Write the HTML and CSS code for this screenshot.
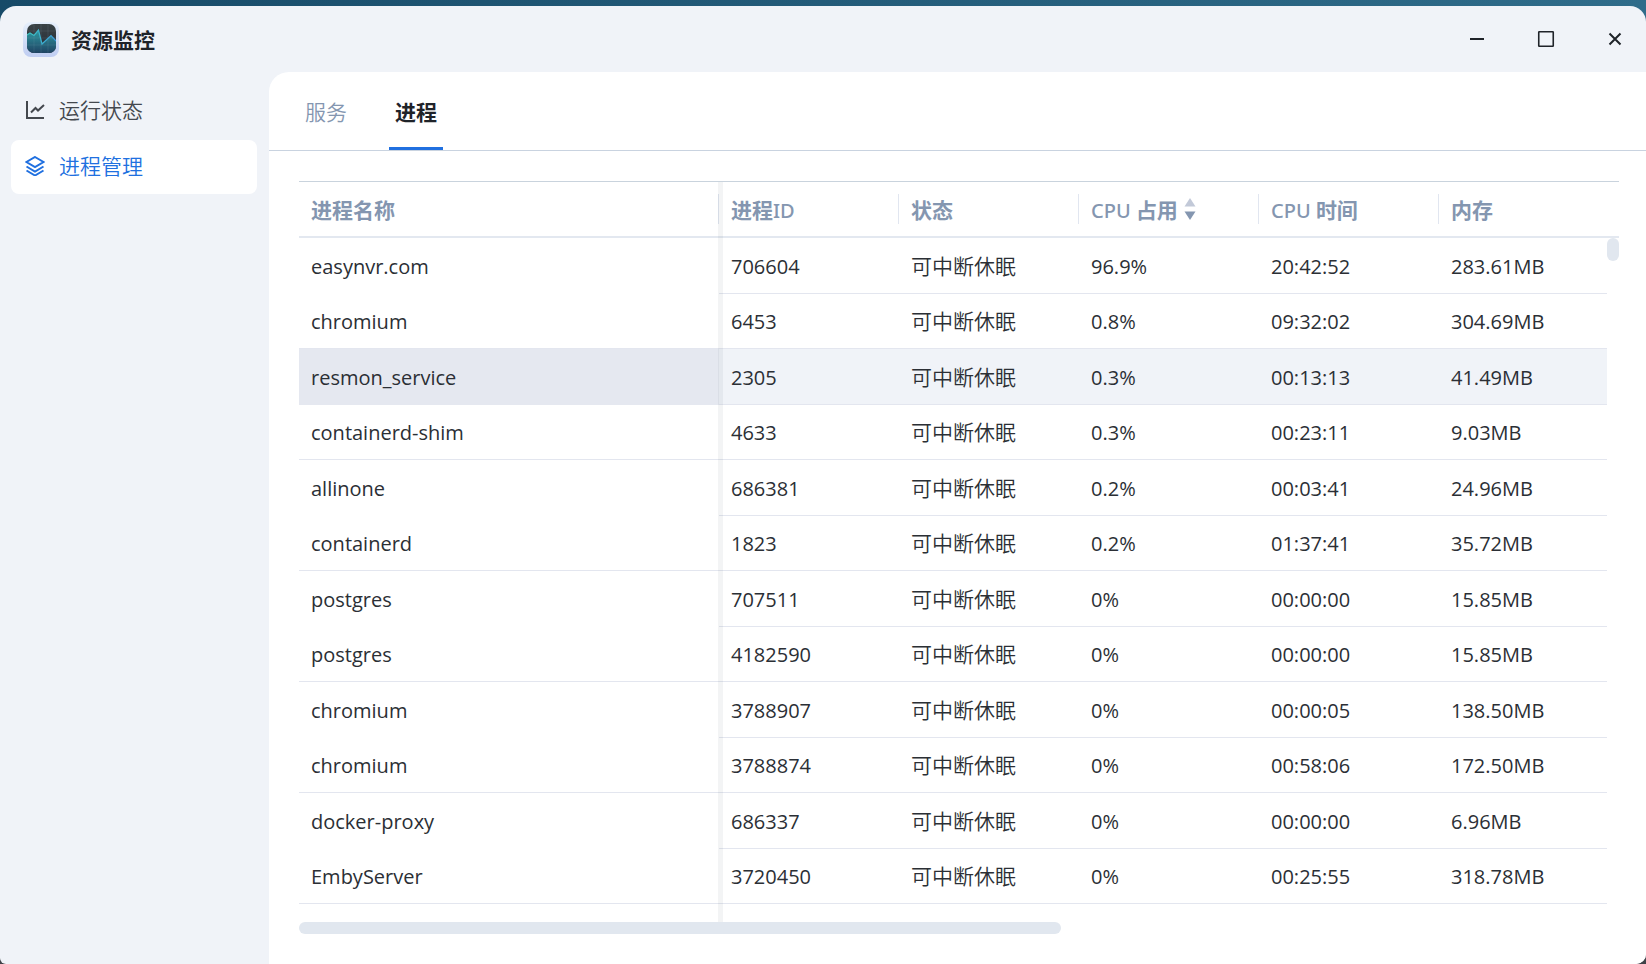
FILE: index.html
```
<!DOCTYPE html>
<html lang="zh-CN">
<head>
<meta charset="utf-8">
<title>资源监控</title>
<link rel="stylesheet" href="styles.css">
</head>
<body>
<div class="window">
  <header class="titlebar">
    <div class="brand">
      <svg class="app-icon" viewBox="0 0 36 36" aria-hidden="true">
        <defs>
          <linearGradient id="frame" x1="0" y1="0" x2="0" y2="1"><stop offset="0" stop-color="#e6effb"/><stop offset="1" stop-color="#bfcdf2"/></linearGradient>
          <linearGradient id="screen" x1="0" y1="0" x2="0" y2="1"><stop offset="0" stop-color="#3a4245"/><stop offset="1" stop-color="#232c38"/></linearGradient>
          <linearGradient id="area" x1="0" y1="0" x2="0" y2="1"><stop offset="0" stop-color="#2f9aa2"/><stop offset="1" stop-color="#1f4363"/></linearGradient>
          <linearGradient id="trace" x1="0" y1="0" x2="1" y2="0"><stop offset="0" stop-color="#3cc4be"/><stop offset="1" stop-color="#3d98dc"/></linearGradient>
          <clipPath id="clip"><rect x="4" y="2" width="29" height="29" rx="7"/></clipPath>
        </defs>
        <rect x="0" y="0" width="36" height="35" rx="8" fill="url(#frame)"/>
        <g clip-path="url(#clip)">
          <rect x="4" y="2" width="29" height="29" fill="url(#screen)"/>
          <path d="M4 13L7 11L11 13.500L15.500 8L19 22L28 13.500L33 19V31H4Z" fill="url(#area)"/>
          <path d="M11 2V31M18 2V31M25 2V31M4 9H33M4 16H33M4 23H33" stroke="#8fb0b8" stroke-opacity=".14" fill="none"/>
          <path d="M4 13L7 11L11 13.500L15.500 8L19 22L28 13.500L33 19" fill="none" stroke="url(#trace)" stroke-width="1.200"/>
        </g>
      </svg>
      <h1 class="title">资源监控</h1>
    </div>
    <div class="controls">
      <button class="control" type="button" aria-label="最小化"><svg viewBox="0 0 20 20"><path d="M3 10H17"/></svg></button>
      <button class="control" type="button" aria-label="最大化"><svg viewBox="0 0 20 20"><rect x="2.750" y="2.750" width="14.500" height="14.500" rx=".5" stroke-width="1.600"/></svg></button>
      <button class="control" type="button" aria-label="关闭"><svg viewBox="0 0 20 20"><path d="M4.500 4.500L15.500 15.500M15.500 4.500L4.500 15.500"/></svg></button>
    </div>
  </header>
  <div class="main">
    <nav class="sidebar">
      <a class="nav-item" href="#status"><svg viewBox="0 0 20 20"><path d="M2 1V18H19"/><path d="M6 12.500L10.500 8L13 10.500L19 5"/></svg>运行状态</a>
      <a class="nav-item nav-item-active" href="#process" aria-current="page"><svg viewBox="0 0 20 20"><path d="M10 1L18.500 6L10 11L1.500 6Z"/><path d="M1.500 10.500L10 15.500L18.500 10.500"/><path d="M1.500 14.500L10 19.500L18.500 14.500"/></svg>进程管理</a>
    </nav>
    <main class="panel">
      <div class="tabs" role="tablist">
        <button class="tab" type="button" role="tab" aria-selected="false">服务</button>
        <button class="tab tab-active" type="button" role="tab" aria-selected="true">进程</button>
      </div>
      <div class="content">
        <div class="table-area">
          <table class="processes">
            <colgroup><col class="col-name"><col class="col-data"><col class="col-data"><col class="col-data"><col class="col-data"><col><col class="col-gutter"></colgroup>
            <thead>
              <tr>
                <th scope="col"><b>进程名称</b></th>
                <th scope="col"><b>进程</b>ID</th>
                <th scope="col"><b>状态</b></th>
                <th scope="col" aria-sort="descending">CPU <b>占用</b><svg class="sort" viewBox="0 0 12 22" aria-hidden="true"><path class="sort-up" d="M6 0L11.500 8.500H.5Z"/><path class="sort-down" d="M6 22L11.500 13.500H.5Z"/></svg></th>
                <th scope="col">CPU <b>时间</b></th>
                <th scope="col"><b>内存</b></th>
                <td class="corner"></td>
              </tr>
            </thead>
            <tbody>
              <tr><td>easynvr.com</td><td>706604</td><td class="state">可中断休眠</td><td>96.9%</td><td>20:42:52</td><td>283.61MB</td><td class="gutter" rowspan="12"><div class="thumb-y"></div></td></tr>
              <tr><td>chromium</td><td>6453</td><td class="state">可中断休眠</td><td>0.8%</td><td>09:32:02</td><td>304.69MB</td></tr>
              <tr class="selected"><td>resmon_service</td><td>2305</td><td class="state">可中断休眠</td><td>0.3%</td><td>00:13:13</td><td>41.49MB</td></tr>
              <tr><td>containerd-shim</td><td>4633</td><td class="state">可中断休眠</td><td>0.3%</td><td>00:23:11</td><td>9.03MB</td></tr>
              <tr><td>allinone</td><td>686381</td><td class="state">可中断休眠</td><td>0.2%</td><td>00:03:41</td><td>24.96MB</td></tr>
              <tr><td>containerd</td><td>1823</td><td class="state">可中断休眠</td><td>0.2%</td><td>01:37:41</td><td>35.72MB</td></tr>
              <tr><td>postgres</td><td>707511</td><td class="state">可中断休眠</td><td>0%</td><td>00:00:00</td><td>15.85MB</td></tr>
              <tr><td>postgres</td><td>4182590</td><td class="state">可中断休眠</td><td>0%</td><td>00:00:00</td><td>15.85MB</td></tr>
              <tr><td>chromium</td><td>3788907</td><td class="state">可中断休眠</td><td>0%</td><td>00:00:05</td><td>138.50MB</td></tr>
              <tr><td>chromium</td><td>3788874</td><td class="state">可中断休眠</td><td>0%</td><td>00:58:06</td><td>172.50MB</td></tr>
              <tr><td>docker-proxy</td><td>686337</td><td class="state">可中断休眠</td><td>0%</td><td>00:00:00</td><td>6.96MB</td></tr>
              <tr><td>EmbyServer</td><td>3720450</td><td class="state">可中断休眠</td><td>0%</td><td>00:25:55</td><td>318.78MB</td></tr>
            </tbody>
          </table>
        </div>
        <div class="thumb-x"></div>
      </div>
    </main>
  </div>
</div>
</body>
</html>
```
FILE: styles.css
```
* { box-sizing: border-box; }

body {
  margin: 0;
  min-height: 100vh;
  padding-top: 6px;
  display: flex;
  background: linear-gradient(90deg, #174a68, #2f6c8a) top / 100% 40px no-repeat #3f4248;
  color: #1f2329;
  font-family: "Open Sans", "Noto Sans CJK SC", sans-serif;
  font-size: 21px;
  line-height: 30px;
}

button { font: inherit; border: 0; background: none; padding: 0; cursor: pointer; }

.window {
  flex: 1;
  display: flex;
  flex-direction: column;
  background: #f0f3f8;
  border-radius: 16px 16px 10px 6px;
  overflow: hidden;
}

.titlebar {
  height: 66px;
  display: flex;
  align-items: center;
  padding: 0 11px 0 23px;
}
.brand { display: flex; align-items: center; gap: 12px; padding-top: 2px; }
.app-icon { width: 36px; height: 36px; }
.title { margin: 0; font-size: 21px; font-weight: 700; }
.controls { margin-left: auto; display: flex; gap: 29px; }
.control { width: 40px; height: 40px; display: grid; place-items: center; }
.control svg { width: 20px; height: 20px; fill: none; stroke: #1f2329; stroke-width: 2; }

.main { flex: 1; display: flex; }

.sidebar {
  width: 269px;
  padding: 12px 12px 0 11px;
  display: flex;
  flex-direction: column;
  gap: 2px;
}
.nav-item {
  height: 54px;
  display: flex;
  align-items: center;
  gap: 14px;
  padding: 0 14px 2px;
  border-radius: 8px;
  color: #44484e;
  font-weight: 350;
  text-decoration: none;
}
.nav-item svg { width: 20px; height: 20px; fill: none; stroke: currentColor; stroke-width: 2; }
.nav-item-active { background: #fff; color: #2070e0; }

.panel {
  flex: 1;
  min-width: 0;
  background: #fff;
  border-top-left-radius: 20px;
}
.tabs {
  height: 79px;
  display: flex;
  gap: 36px;
  padding-left: 30px;
  border-bottom: 1px solid #c9d3e0;
}
.tab {
  padding: 5px 6px 0;
  border-bottom: 3px solid transparent;
  color: #8496b0;
  font-weight: 350;
}
.tab-active { color: #1f2329; font-weight: 700; border-bottom-color: #2070e0; }

.content { padding: 30px 27px 30px 30px; }
.table-area { position: relative; padding-bottom: 18px; }
.table-area::after {
  content: "";
  position: absolute;
  top: 1px;
  bottom: 0;
  left: 419px;
  width: 5px;
  background: rgba(20, 30, 60, .05);
}

.processes {
  width: 100%;
  table-layout: fixed;
  border-collapse: separate;
  border-spacing: 0;
}
.col-name { width: 420px; }
.col-data { width: 180px; }
.col-gutter { width: 12px; }

.processes th,
.corner {
  height: 57px;
  border-top: 1px solid #c9d3dd;
  border-bottom: 2px solid #e3e8f0;
}
.processes th {
  position: relative;
  padding: 2px 12px 0;
  color: #8496b0;
  font-family: "Noto Sans", "Noto Sans CJK SC", sans-serif;
  font-size: 20px;
  font-weight: 500;
  text-align: left;
  white-space: nowrap;
}
.processes th b { font-size: 21px; font-weight: 700; }
.processes th:not(:nth-child(6))::after {
  content: "";
  position: absolute;
  top: 12px;
  right: 0;
  width: 1px;
  height: 30px;
  background: #e1e6f0;
}
.sort { width: 12px; height: 22px; margin-left: 6px; vertical-align: -2px; }
.sort-up { fill: #c2c9d8; }
.sort-down { fill: #8496b0; }

.processes tbody td {
  height: 55px;
  padding: 2px 12px 0;
  border-bottom: 1px solid #e3e6ef;
  color: #2b2f35;
  font-size: 20px;
  white-space: nowrap;
}
.processes tbody tr:nth-child(odd) td { height: 56px; }
.processes tbody tr:nth-child(odd) td:first-child { border-bottom-color: transparent; }
.processes tbody .state { padding-top: 0; font-size: 21px; font-weight: 350; }
.selected td { background: #f0f3f8; }
.selected td:first-child { background: #e5e8f0; }

.processes tbody .gutter { padding: 0; border: 0; vertical-align: top; }
.thumb-y { height: 23px; border-radius: 6px; background: #e1e7ef; }
.thumb-x { width: 57.7%; height: 12px; border-radius: 6px; background: #e1e7ef; }
```
